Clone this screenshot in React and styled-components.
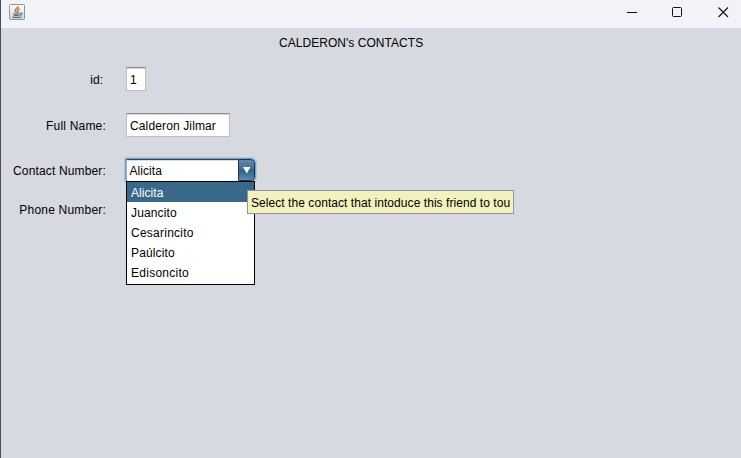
import React from 'react';
import styled, { createGlobalStyle } from 'styled-components';

const GlobalStyle = createGlobalStyle`
  * { box-sizing: border-box; }
  html, body { margin: 0; padding: 0; overflow: hidden; }
`;

const Window = styled.div`
  width: 741px;
  height: 458px;
  display: flex;
  flex-direction: column;
  background: #d6d9df;
  border-left: 1px solid #4b4b50;
  font: 12px/14px 'Liberation Sans', Arial, sans-serif;
  color: #000;
  white-space: nowrap;
  overflow: hidden;
`;

const TitleBar = styled.header`
  flex: none;
  height: 28px;
  display: flex;
  justify-content: space-between;
  background: #f1f3f9;
`;

const AppIcon = styled.svg`
  width: 16px;
  height: 16px;
  margin: 4px 0 0 8px;
`;

const Controls = styled.div`
  display: flex;
  gap: 35px;
  padding: 6px 12px 0 0;
`;

const ControlIcon = styled.svg`
  width: 11px;
  height: 12px;
  fill: none;
  stroke: #111;
`;

const Panel = styled.main`
  flex: 1;
  display: flex;
  flex-direction: column;
`;

const Heading = styled.h1`
  margin: 8px 0 0 278px;
  height: 14px;
  font: inherit;
`;

const Form = styled.div`
  margin-top: 17px;
  display: grid;
  grid-template-columns: 105px 130px;
  grid-template-rows: 24px 24px 24px 10px;
  column-gap: 20px;
  row-gap: 22px;
`;

const Label = styled.label`
  justify-self: end;
  align-self: center;
  padding-right: ${(p) => p.$inset || 0}px;
  padding-top: ${(p) => p.$drop || 0}px;
`;

const Text = styled.span`
  letter-spacing: ${(p) => p.$tracking || 0}px;
`;

const Field = styled.div`
  width: ${(p) => p.$width}px;
  height: 24px;
  padding: 5px 0 0 3px;
  background: #fff;
  border: 1px solid #bdbec3;
  border-top-color: #8d8e92;
  box-shadow: inset 0 1px 0 #d5d6da;
`;

const Select = styled.div`
  position: relative;
  width: 131px;
  height: 24px;
  margin: -1px 0 0 -1px;
  display: flex;
  border: 1px solid #73a4d1;
  border-radius: 2px 5px 5px 2px;
  background: #fff;
  box-shadow: 0 0 0 1px rgba(115, 164, 209, 0.4);
`;

const SelectValue = styled.div`
  flex: 1;
  border-top: 1px solid #3a4048;
  border-left: 1px solid #a3a9b0;
  box-shadow: inset 0 1px 0 #d9dbdf;
  padding: 4px 0 0 2.5px;
`;

const SelectButton = styled.div`
  width: 17px;
  border: 1px solid #1b344c;
  border-radius: 0 4px 4px 0;
  background: linear-gradient(#6488a9 0%, #426f96 45%, #31638c 55%, #5c8cb4 100%);
`;

const Arrow = styled.svg`
  display: block;
  width: 15px;
  height: 19px;
`;

const Menu = styled.div`
  position: absolute;
  z-index: 1;
  top: 22px;
  left: 0;
  width: 129px;
  height: 104px;
  border: 1px solid #000;
  background: #fff;
`;

const Option = styled.div`
  height: 20px;
  padding: 4px 0 0 4px;
  color: ${(p) => (p.$selected ? '#fff' : '#000')};
  background: ${(p) => (p.$selected ? '#39698a' : '#fff')};
`;

const Tooltip = styled.div`
  position: absolute;
  z-index: 2;
  top: 31px;
  left: 121px;
  width: 267px;
  height: 24px;
  padding: 5px 0 0 3px;
  border: 1px solid #92959d;
  background: #f2f2bd;
`;

const options = [
  { name: 'Alicita', tracking: 0.05 },
  { name: 'Juancito', tracking: 0.15 },
  { name: 'Cesarincito', tracking: 0.25 },
  { name: 'Paúlcito', tracking: 0.15 },
  { name: 'Edisoncito', tracking: 0.27 },
];

export default function App() {
  return (
    <>
      <GlobalStyle />
      <Window>
        <TitleBar>
          <AppIcon viewBox="0 0 16 16">
            <defs>
              <linearGradient id="tile" x1="0" y1="0" x2="0" y2="1">
                <stop offset="0" stopColor="#fff" />
                <stop offset="1" stopColor="#c7d5df" />
              </linearGradient>
            </defs>
            <rect x=".5" y=".5" width="15" height="15" rx="1" fill="url(#tile)" stroke="#8198a9" />
            <path d="M9.200 2.200C9.200 4.200 6.200 4.700 6.200 6.700C6.200 7.700 7.300 8 7.500 9M10.700 4.800C8.500 5.500 8.200 6.200 8.800 7.200C9.300 8 8.800 8.600 8.300 9" fill="none" stroke="#e8772a" strokeWidth="1.700" />
            <path d="M4 9.700Q7.500 10.500 11 9.700M4.700 11.300Q7.500 12 10.300 11.300M11.200 9C13.800 8.500 13.200 10.800 11 11.400M3.300 13Q7.500 14 12.300 13" fill="none" stroke="#41708f" strokeWidth="1.100" />
          </AppIcon>
          <Controls>
            <ControlIcon viewBox="0 0 11 12"><path d="M1 6.500H11" /></ControlIcon>
            <ControlIcon viewBox="0 0 11 12"><rect x=".5" y="1.500" width="9" height="9" rx="1" /></ControlIcon>
            <ControlIcon viewBox="0 0 11 12"><path d="M.5 1.500L10 11M10 1.500L.5 11" strokeWidth="1.100" /></ControlIcon>
          </Controls>
        </TitleBar>
        <Panel>
          <Heading><Text $tracking={0.04}>CALDERON's CONTACTS</Text></Heading>
          <Form>
            <Label $inset={3} $drop={2}><Text>id:</Text></Label>
            <Field $width={20}><Text>1</Text></Field>
            <Label $drop={2}><Text $tracking={0.2}>Full Name:</Text></Label>
            <Field $width={104}><Text $tracking={0.13}>Calderon Jilmar</Text></Field>
            <Label><Text $tracking={0.15}>Contact Number:</Text></Label>
            <Select>
              <SelectValue><Text $tracking={0.05}>Alicita</Text></SelectValue>
              <SelectButton>
                <Arrow viewBox="0 0 15 19"><path d="M4 7H11.500L7.750 13.500Z" fill="#fff" /></Arrow>
              </SelectButton>
              <Menu>
                {options.map((o, i) => (
                  <Option key={o.name} $selected={i === 0}><Text $tracking={o.tracking}>{o.name}</Text></Option>
                ))}
              </Menu>
              <Tooltip><Text $tracking={0.06}>Select the contact that intoduce this friend to tou</Text></Tooltip>
            </Select>
            <Label><Text $tracking={0.2}>Phone Number:</Text></Label>
          </Form>
        </Panel>
      </Window>
    </>
  );
}
